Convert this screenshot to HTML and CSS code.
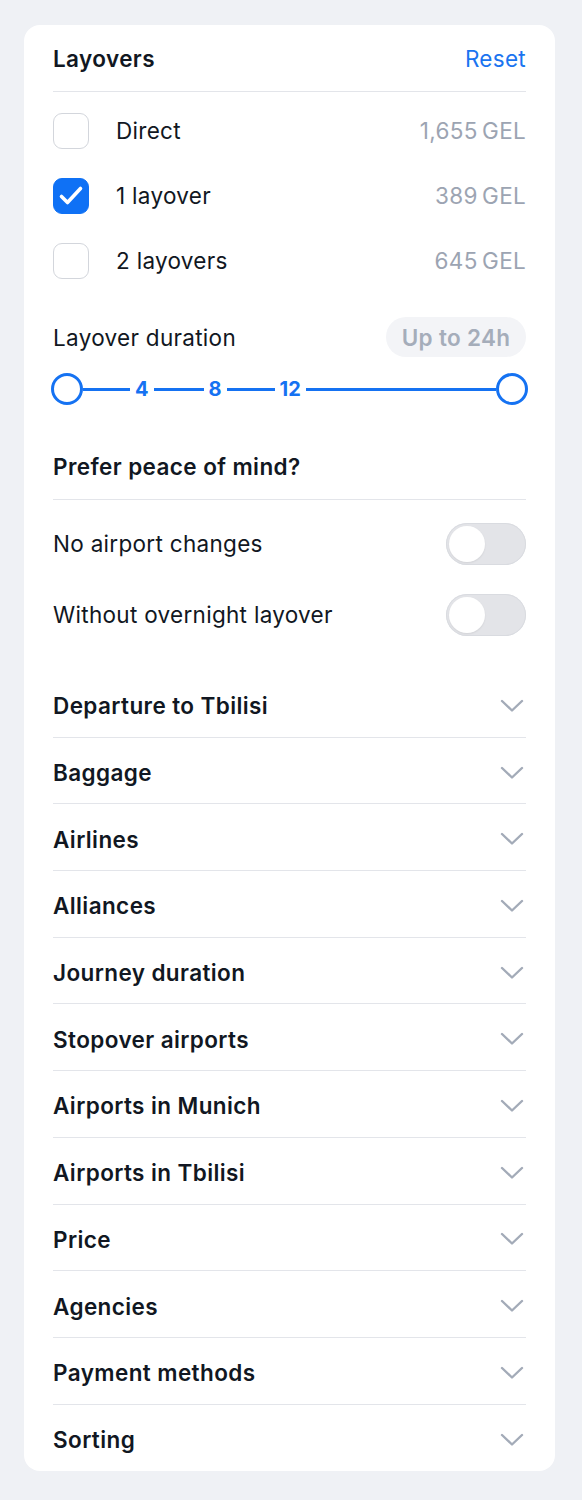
FILE: index.html
```html
<!DOCTYPE html>
<html lang="en">
<head>
<meta charset="utf-8">
<title>Filters</title>
<link rel="stylesheet" href="styles.css">
</head>
<body>
<div class="card">
  <div class="head">
    <span class="head-title">Layovers</span>
    <span class="reset">Reset</span>
  </div>
  <div class="checks">
    <div class="check-row">
      <span class="box"></span>
      <span class="check-label">Direct</span>
      <span class="price">1,655&#8201;GEL</span>
    </div>
    <div class="check-row">
      <span class="box on">
        <svg viewBox="0 0 36 36" width="36" height="36"><path d="M8.5 18.5L14.5 24.5L27.5 10.5" fill="none" stroke="#fff" stroke-width="3.6" stroke-linecap="round" stroke-linejoin="round"/></svg>
      </span>
      <span class="check-label">1 layover</span>
      <span class="price">389&#8201;GEL</span>
    </div>
    <div class="check-row">
      <span class="box"></span>
      <span class="check-label">2 layovers</span>
      <span class="price">645&#8201;GEL</span>
    </div>
  </div>
  <div class="duration">
    <span class="duration-label">Layover duration</span>
    <span class="pill">Up to 24h</span>
  </div>
  <div class="slider">
    <span class="knob"></span>
    <span class="line l1"></span>
    <span class="tick">4</span>
    <span class="line l2"></span>
    <span class="tick">8</span>
    <span class="line l3"></span>
    <span class="tick">12</span>
    <span class="line grow"></span>
    <span class="knob"></span>
  </div>
  <div class="head peace">
    <span class="head-title">Prefer peace of mind?</span>
  </div>
  <div class="toggles">
    <div class="toggle-row">
      <span>No airport changes</span>
      <span class="switch"><span class="thumb"></span></span>
    </div>
    <div class="toggle-row">
      <span>Without overnight layover</span>
      <span class="switch"><span class="thumb"></span></span>
    </div>
  </div>
  <div class="accordion">
    <div class="acc-row"><span>Departure to Tbilisi</span><svg class="chev" viewBox="0 0 24 14" width="24" height="14"><path d="M2 2l10 9.5L22 2" fill="none" stroke="currentColor" stroke-width="2.4" stroke-linecap="round" stroke-linejoin="round"/></svg></div>
    <div class="acc-row"><span>Baggage</span><svg class="chev" viewBox="0 0 24 14" width="24" height="14"><path d="M2 2l10 9.5L22 2" fill="none" stroke="currentColor" stroke-width="2.4" stroke-linecap="round" stroke-linejoin="round"/></svg></div>
    <div class="acc-row"><span>Airlines</span><svg class="chev" viewBox="0 0 24 14" width="24" height="14"><path d="M2 2l10 9.5L22 2" fill="none" stroke="currentColor" stroke-width="2.4" stroke-linecap="round" stroke-linejoin="round"/></svg></div>
    <div class="acc-row"><span>Alliances</span><svg class="chev" viewBox="0 0 24 14" width="24" height="14"><path d="M2 2l10 9.5L22 2" fill="none" stroke="currentColor" stroke-width="2.4" stroke-linecap="round" stroke-linejoin="round"/></svg></div>
    <div class="acc-row"><span>Journey duration</span><svg class="chev" viewBox="0 0 24 14" width="24" height="14"><path d="M2 2l10 9.5L22 2" fill="none" stroke="currentColor" stroke-width="2.4" stroke-linecap="round" stroke-linejoin="round"/></svg></div>
    <div class="acc-row"><span>Stopover airports</span><svg class="chev" viewBox="0 0 24 14" width="24" height="14"><path d="M2 2l10 9.5L22 2" fill="none" stroke="currentColor" stroke-width="2.4" stroke-linecap="round" stroke-linejoin="round"/></svg></div>
    <div class="acc-row"><span>Airports in Munich</span><svg class="chev" viewBox="0 0 24 14" width="24" height="14"><path d="M2 2l10 9.5L22 2" fill="none" stroke="currentColor" stroke-width="2.4" stroke-linecap="round" stroke-linejoin="round"/></svg></div>
    <div class="acc-row"><span>Airports in Tbilisi</span><svg class="chev" viewBox="0 0 24 14" width="24" height="14"><path d="M2 2l10 9.5L22 2" fill="none" stroke="currentColor" stroke-width="2.4" stroke-linecap="round" stroke-linejoin="round"/></svg></div>
    <div class="acc-row"><span>Price</span><svg class="chev" viewBox="0 0 24 14" width="24" height="14"><path d="M2 2l10 9.5L22 2" fill="none" stroke="currentColor" stroke-width="2.4" stroke-linecap="round" stroke-linejoin="round"/></svg></div>
    <div class="acc-row"><span>Agencies</span><svg class="chev" viewBox="0 0 24 14" width="24" height="14"><path d="M2 2l10 9.5L22 2" fill="none" stroke="currentColor" stroke-width="2.4" stroke-linecap="round" stroke-linejoin="round"/></svg></div>
    <div class="acc-row"><span>Payment methods</span><svg class="chev" viewBox="0 0 24 14" width="24" height="14"><path d="M2 2l10 9.5L22 2" fill="none" stroke="currentColor" stroke-width="2.4" stroke-linecap="round" stroke-linejoin="round"/></svg></div>
    <div class="acc-row"><span>Sorting</span><svg class="chev" viewBox="0 0 24 14" width="24" height="14"><path d="M2 2l10 9.5L22 2" fill="none" stroke="currentColor" stroke-width="2.4" stroke-linecap="round" stroke-linejoin="round"/></svg></div>
  </div>
</div>
</body>
</html>
```

FILE: styles.css
```css
* { box-sizing: border-box; }
html, body { margin: 0; padding: 0; }
body {
  background: #eff1f5;
  font-family: Inter, "Noto Sans", "Liberation Sans", sans-serif;
  color: #111722;
  font-size: 22.5px;
  letter-spacing: 0.3px;
  padding: 25px 0 29px 24px;
}
.card {
  width: 531px;
  background: #fff;
  border-radius: 16px;
  padding: 0 29px;
}
.head {
  height: 67px;
  display: flex;
  align-items: center;
  justify-content: space-between;
  border-bottom: 1px solid #e3e5ea;
}
.head-title { font-weight: 600; letter-spacing: 0.4px; }
.reset { color: #1a74f0; }
.checks { padding-top: 6px; }
.check-row {
  height: 65px;
  display: flex;
  align-items: center;
}
.box {
  width: 36px;
  height: 36px;
  border: 1.5px solid #d3d6dc;
  border-radius: 9px;
  flex: none;
  display: flex;
  align-items: center;
  justify-content: center;
}
.box.on { background: #0f71f5; border-color: #0f71f5; }
.box.on svg { flex: none; }
.check-label { margin-left: 27px; flex: 1; }
.price { color: #9ca4b2; }
.duration {
  margin-top: 24px;
  display: flex;
  align-items: center;
  justify-content: space-between;
}
.pill {
  width: 140px;
  height: 40px;
  border-radius: 20px;
  background: #f3f4f7;
  color: #a5adba;
  font-weight: 600;
  display: flex;
  align-items: center;
  justify-content: center;
}
.slider {
  margin-top: 16px;
  height: 32px;
  display: flex;
  align-items: center;
  margin-left: -2px;
  margin-right: -2px;
}
.knob {
  width: 32px;
  height: 32px;
  border: 3px solid #1572f2;
  border-radius: 50%;
  flex: none;
}
.line { height: 3px; background: #1572f2; flex: none; }
.l1 { width: 47px; }
.l2 { width: 50px; }
.l3 { width: 48px; }
.grow { flex: 1; }
.tick {
  color: #1572f2;
  font-weight: 700;
  font-size: 20px;
  letter-spacing: 0;
  margin: 0 5px;
  line-height: 1;
}
.peace { margin-top: 28px; }
.toggles { padding-top: 8px; }
.toggle-row {
  height: 71px;
  display: flex;
  align-items: center;
  justify-content: space-between;
}
.switch {
  width: 80px;
  height: 42px;
  border-radius: 21px;
  background: #e3e4e8;
  box-shadow: inset 0 0 0 1px #d9dbe0;
  padding: 3px;
  display: flex;
  align-items: center;
}
.thumb {
  width: 36px;
  height: 36px;
  border-radius: 50%;
  background: #fff;
  box-shadow: 0 1px 2px rgba(0,0,0,0.08);
}
.accordion { margin-top: 21px; }
.acc-row {
  height: 66.7px;
  display: flex;
  align-items: center;
  justify-content: space-between;
  border-bottom: 1px solid #e3e5ea;
  font-weight: 600;
  letter-spacing: 0.4px;
  padding-top: 4px;
}
.acc-row:last-child { border-bottom: none; }
.chev { color: #a3abb8; margin-right: 2px; }
```
